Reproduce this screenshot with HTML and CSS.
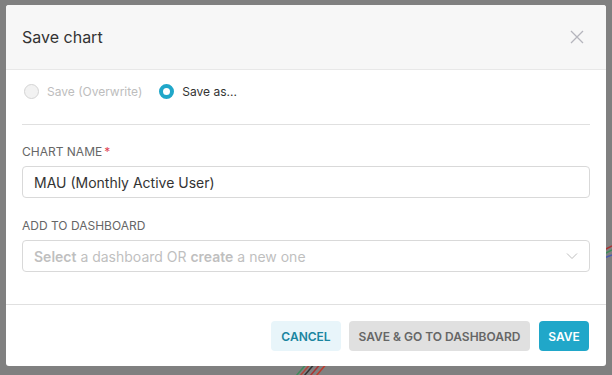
FILE: index.html
```html
<!DOCTYPE html>
<html lang="en">

<head>
    <meta charset="UTF-8">
    <meta name="viewport" content="width=device-width, initial-scale=1.0">
    <title>Save chart</title>
    <link rel="stylesheet" href="styles.css">
</head>

<body>
    <!--chart lines behind the overlay-->
    <svg class="backdrop" width="612" height="375" viewBox="0 0 612 375">
        <g stroke-width="1.5" fill="none">
            <path d="M296 376 L308 362" stroke="#3f8a5a"/>
            <path d="M300 376 L312 362" stroke="#b2443a"/>
            <path d="M304 376 L316 362" stroke="#333"/>
            <path d="M310 376 L322 362" stroke="#a33"/>
            <path d="M316 376 L328 362" stroke="#c0392b"/>
            <path d="M604 250 L612 246" stroke="#a33"/>
            <path d="M604 254 L612 250" stroke="#3f8a5a"/>
            <path d="M604 258 L612 255" stroke="#4a5bb0"/>
        </g>
    </svg>

    <div class="modal">
        <!--header-->
        <div class="modal-header">
            <h4 class="modal-title">Save chart</h4>
            <svg class="close" width="14" height="14" viewBox="0 0 14 14">
                <path d="M1 1 L13 13 M13 1 L1 13" stroke="#b5b5bd" stroke-width="1.3" fill="none"/>
            </svg>
        </div>

        <!--body-->
        <div class="modal-body">
            <div class="radios">
                <label class="radio disabled"><span class="dot"></span>Save (Overwrite)</label>
                <label class="radio checked"><span class="dot"></span>Save as...</label>
            </div>
            <div class="divider"></div>

            <div class="field-label">CHART NAME<span class="req">*</span></div>
            <div class="input">MAU (Monthly Active User)</div>

            <div class="field-label second">ADD TO DASHBOARD</div>
            <div class="input select">
                <span class="placeholder"><b>Select</b> a dashboard OR <b>create</b> a new one</span>
                <svg width="12" height="8" viewBox="0 0 12 8">
                    <path d="M1 1.5 L6 6.5 L11 1.5" stroke="#bdbdbd" stroke-width="1" fill="none"/>
                </svg>
            </div>
        </div>

        <!--footer-->
        <div class="modal-footer">
            <button class="btn btn-cancel">CANCEL</button>
            <button class="btn btn-secondary">SAVE &amp; GO TO DASHBOARD</button>
            <button class="btn btn-primary">SAVE</button>
        </div>
    </div>
</body>

</html>
```

FILE: styles.css
```css
* {
    margin: 0;
    padding: 0;
    box-sizing: border-box;
}

body {
    width: 612px;
    height: 375px;
    overflow: hidden;
    background-color: #808080;
    font-family: Inter, "Liberation Sans", sans-serif;
    position: relative;
    padding: 5px 6px 0;
}

.backdrop {
    position: absolute;
    left: 0;
    top: 0;
}

.modal {
    position: relative;
    width: 600px;
    height: 361px;
    background-color: #fff;
    border-radius: 3px;
    display: flex;
    flex-direction: column;
}

.modal-header {
    height: 65px;
    background-color: #f7f7f7;
    border-bottom: 1px solid #e8e8e8;
    border-radius: 3px 3px 0 0;
    display: flex;
    align-items: center;
    justify-content: space-between;
    padding: 0 22px 0 16px;
}

.modal-title {
    font-size: 16px;
    font-weight: 400;
    color: #333;
}

.modal-body {
    padding: 12px 16px 0;
    height: 234px;
}

.radios {
    display: flex;
    align-items: center;
    height: 18px;
    gap: 17px;
    padding-left: 2px;
}

.radio {
    display: flex;
    align-items: center;
    gap: 8px;
    font-size: 12px;
    color: #333;
}

.radio.disabled {
    color: #bdbdbd;
}

.dot {
    width: 15px;
    height: 15px;
    border-radius: 50%;
    display: block;
}

.disabled .dot {
    border: 1px solid #d4d4d4;
    background-color: #f2f2f2;
}

.checked .dot {
    border: 4.5px solid #20a7c9;
    box-shadow: inset 0 0 0 3px #fff;
    background-color: #fff;
}

.divider {
    margin-top: 24px;
    height: 1px;
    background-color: #e0e0e0;
}

.field-label {
    margin-top: 19px;
    font-size: 12px;
    line-height: 16px;
    color: #666;
}

.field-label.second {
    margin-top: 20px;
}

.req {
    color: #e04355;
    margin-left: 2px;
}

.input {
    margin-top: 6px;
    height: 32px;
    border: 1px solid #d9d9d9;
    border-radius: 4px;
    padding: 0 11px;
    display: flex;
    align-items: center;
    font-size: 14px;
    color: #333;
}

.select {
    justify-content: space-between;
}

.placeholder {
    color: #bfbfbf;
}

.placeholder b {
    font-weight: 600;
}

.modal-footer {
    flex: 1;
    border-top: 1px solid #e0e0e0;
    display: flex;
    justify-content: flex-end;
    align-items: flex-start;
    gap: 8px;
    padding: 16px 17px 0;
}

.btn {
    height: 30px;
    border: none;
    border-radius: 4px;
    font-family: Inter, "Liberation Sans", sans-serif;
    font-size: 12px;
    font-weight: 600;
    padding: 0;
    white-space: nowrap;
    text-align: center;
}

.btn-cancel {
    width: 70px;
    background-color: #e8f5fa;
    color: #1a85a0;
}

.btn-secondary {
    width: 181px;
    background-color: #e0e0e0;
    color: #666;
}

.btn-primary {
    width: 50px;
    margin-left: 1px;
    background-color: #20a7c9;
    color: #fff;
}
```
